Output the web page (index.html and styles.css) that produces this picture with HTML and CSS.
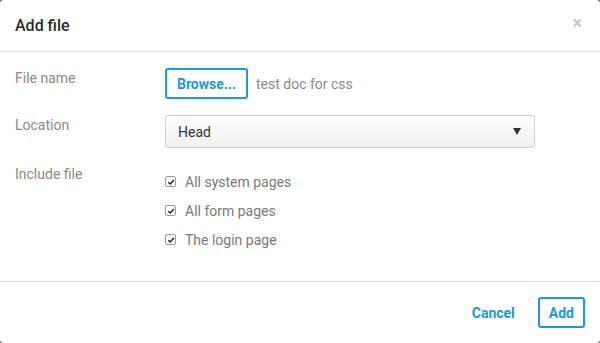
FILE: index.html
```html
<!DOCTYPE html>
<html lang="en">
<head>
    <meta charset="UTF-8">
    <meta name="viewport" content="width=device-width, initial-scale=1.0">
    <title>Add file</title>
    <link rel="stylesheet" href="styles.css">
</head>
<body>
    <div class="modal">
        <div class="modal-header">
            <h2 class="modal-title">Add file</h2>
            <span class="close">&times;</span>
        </div>

        <div class="modal-body">
            <!-- File name -->
            <div class="form-row">
                <label class="form-label">File name</label>
                <div class="form-field file-field">
                    <button class="btn">Browse...</button>
                    <span class="file-name">test doc for css</span>
                </div>
            </div>

            <!-- Location -->
            <div class="form-row">
                <label class="form-label">Location</label>
                <div class="form-field">
                    <div class="select">
                        <span>Head</span>
                        <span class="caret"></span>
                    </div>
                </div>
            </div>

            <!-- Include file -->
            <div class="form-row">
                <label class="form-label">Include file</label>
                <ul class="checks">
                    <li><span class="check"><svg viewBox="0 0 10 10" width="8" height="8"><path d="M1.5 5.2 L4 7.6 L8.6 2.4" fill="none" stroke="#222" stroke-width="1.8"/></svg></span>All system pages</li>
                    <li><span class="check"><svg viewBox="0 0 10 10" width="8" height="8"><path d="M1.5 5.2 L4 7.6 L8.6 2.4" fill="none" stroke="#222" stroke-width="1.8"/></svg></span>All form pages</li>
                    <li><span class="check"><svg viewBox="0 0 10 10" width="8" height="8"><path d="M1.5 5.2 L4 7.6 L8.6 2.4" fill="none" stroke="#222" stroke-width="1.8"/></svg></span>The login page</li>
                </ul>
            </div>
        </div>

        <div class="modal-footer">
            <button class="btn-link">Cancel</button>
            <button class="btn">Add</button>
        </div>
    </div>
</body>
</html>
```

FILE: styles.css
```css
body {
    font-family: Roboto, "Liberation Sans", Arial, sans-serif;
    margin: 0;
    padding: 0;
    background-color: #6b6b6b;
}
.modal {
    height: 343px;
    background-color: #fff;
    border-radius: 4px;
    display: flex;
    flex-direction: column;
}
.modal-header {
    height: 51px;
    border-bottom: 1px solid #e3e3e3;
    display: flex;
    align-items: center;
    justify-content: space-between;
    padding: 0 15px;
}
.modal-title {
    margin: 0;
    font-size: 16px;
    font-weight: 500;
    color: #2b2b2b;
}
.close {
    color: #c8c8c8;
    font-size: 18px;
    font-weight: bold;
    margin-top: -6px;
    margin-right: 3px;
}
.modal-body {
    flex: 1;
    padding: 16px 15px 0;
}
.form-row {
    display: flex;
    margin-bottom: 16px;
}
.form-label {
    width: 150px;
    flex-shrink: 0;
    font-size: 14px;
    line-height: 20px;
    color: #8a8a8a;
}
.form-field {
    flex: 1;
}
.file-field {
    display: flex;
    align-items: center;
}
.file-name {
    margin-left: 8px;
    font-size: 14px;
    color: #8a8a8a;
}
.btn {
    height: 31px;
    padding: 0 9px;
    background-color: #fff;
    border: 2px solid #1a9ad6;
    border-radius: 3px;
    color: #1a9ad6;
    font-family: inherit;
    font-size: 14px;
    font-weight: bold;
}
.file-field .btn {
    padding: 0 10px;
}
.select {
    box-sizing: border-box;
    width: 370px;
    height: 33px;
    border: 1px solid #cfcfcf;
    border-radius: 3px;
    background: linear-gradient(#fff, #efefef);
    display: flex;
    align-items: center;
    justify-content: space-between;
    padding: 0 13px 0 12px;
    font-size: 14px;
    color: #333;
}
.caret {
    width: 0;
    height: 0;
    border-left: 4px solid transparent;
    border-right: 4px solid transparent;
    border-top: 7px solid #333;
}
.checks {
    list-style: none;
    margin: 3px 0 0;
    padding: 0;
}
.checks li {
    height: 29px;
    display: flex;
    align-items: center;
    font-size: 14px;
    color: #7a7a7a;
}
.check {
    width: 9px;
    height: 9px;
    border: 1px solid #9a9a9a;
    border-radius: 2px;
    display: flex;
    align-items: center;
    justify-content: center;
    margin-right: 9px;
}
.modal-footer {
    height: 61px;
    border-top: 1px solid #e3e3e3;
    display: flex;
    align-items: center;
    justify-content: flex-end;
    padding: 0 15px;
    gap: 23px;
}
.btn-link {
    background: none;
    border: none;
    padding: 0;
    color: #1a9ad6;
    font-family: inherit;
    font-size: 14px;
    font-weight: bold;
}
```
